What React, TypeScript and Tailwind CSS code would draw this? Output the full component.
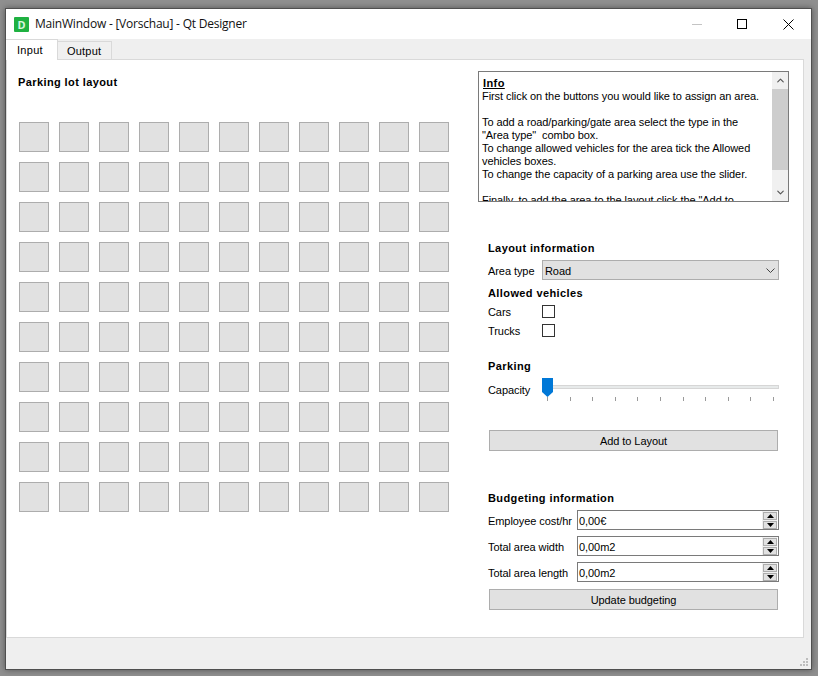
import React from 'react';
import { ChevronDown, ChevronUp } from 'lucide-react';

const ticks = Array.from({ length: 11 }, (_, i) => i);
const cells = Array.from({ length: 110 }, (_, i) => i);

function SpinBox({ value }: { value: string }) {
  return (
    <div className="flex h-[20px] w-[202px] items-center border border-[#7a7a7a] bg-white pl-[1px] pr-[1px]">
      <span className="flex-1 pt-[2px]">{value}</span>
      <div className="flex h-[18px] w-[15px] flex-col justify-center gap-[1px] bg-[#f0f0f0] pl-[1px]">
        <div className="flex h-[8px] items-center justify-center border border-[#adadad] bg-[#e1e1e1]">
          <svg width="7" height="4" viewBox="0 0 7 4"><path d="M3.5 0L7 4H0z" fill="#000" /></svg>
        </div>
        <div className="flex h-[8px] items-center justify-center border border-[#adadad] bg-[#e1e1e1]">
          <svg width="7" height="4" viewBox="0 0 7 4"><path d="M0 0h7L3.5 4z" fill="#000" /></svg>
        </div>
      </div>
    </div>
  );
}

function BudgetRow({ label, value, className }: { label: string; value: string; className?: string }) {
  return (
    <div className={`flex h-[20px] items-center ${className ?? ''}`}>
      <span className="w-[89px] pt-[2px]">{label}</span>
      <SpinBox value={value} />
    </div>
  );
}

export default function App() {
  return (
    <div className="h-[676px] w-[818px] overflow-hidden bg-[#8f8f8f] pl-[5px] pt-[8px] font-['Liberation_Sans',sans-serif] text-[11px] leading-[13px] tracking-[-0.07px] text-black">
      <div className="flex h-[662px] w-[807px] flex-col border border-[#4f4f4f] bg-[#efefef] shadow-[0_0_6px_rgba(0,0,0,0.4)]">
        <div className="flex h-[30px] items-center bg-white pl-[8px]">
          <div className="flex h-[15px] w-[15px] items-center justify-center rounded-[1px] bg-[#1fb141] font-['Noto_Sans',sans-serif] text-[11px] font-bold text-[#d8f5dc]">D</div>
          <span className="ml-[6px] font-['Open_Sans',sans-serif] text-[12px] leading-[16px] tracking-[-0.22px] text-[#111]">MainWindow - [Vorschau] - Qt Designer</span>
          <div className="ml-auto flex items-center">
            <div className="h-[1px] w-[10px] bg-[#c4c4c4]" />
            <div className="ml-[35px] h-[10px] w-[10px] border border-black" />
            <svg className="ml-[36px] mr-[17px]" width="11" height="11" viewBox="0 0 11 11">
              <path d="M0.5 0.5l10 10M10.5 0.5l-10 10" stroke="#000" strokeWidth="1" fill="none" />
            </svg>
          </div>
        </div>
        <div className="flex h-[20px] items-start">
          <div className="relative z-10 flex h-[21px] w-[52px] items-start border-r border-t border-[#d9d9d9] bg-white pl-[11px] pt-[4px] tracking-[0.3px]">Input</div>
          <div className="mt-[2px] flex h-[18px] w-[54px] items-start border-r border-t border-[#d9d9d9] bg-[#f0f0f0] pl-[9px] pt-[3px] tracking-[0.2px]">Output</div>
        </div>
        <div className="flex h-[579px] w-[798px] border border-[#d9d9d9] bg-white">
          <div className="w-[471px] pl-[12px] pt-[16px]">
            <h1 className="-ml-[1px] font-bold tracking-[0.4px]">Parking lot layout</h1>
            <div className="mt-[33px] grid grid-cols-[repeat(11,30px)] gap-[10px]">
              {cells.map((i) => (
                <div key={i} className="h-[30px] w-[30px] border border-[#adadad] bg-[#e1e1e1]" />
              ))}
            </div>
          </div>
          <div className="w-[311px] pt-[11px]">
            <div className="flex h-[131px] w-[311px] border border-[#7a7a7a] bg-white">
              <div className="flex-1 overflow-hidden pl-[3px] pt-[5px]">
                <p className="pl-[1px] font-bold tracking-[0.4px] underline">Info</p>
                <p>First click on the buttons you would like to assign an area.</p>
                <p className="mt-[13px]">To add a road/parking/gate area select the type in the</p>
                <p>"Area type"&nbsp; combo box.</p>
                <p>To change allowed vehicles for the area tick the Allowed</p>
                <p>vehicles boxes.</p>
                <p>To change the capacity of a parking area use the slider.</p>
                <p className="mt-[13px] whitespace-nowrap">Finally, to add the area to the layout click the "Add to</p>
              </div>
              <div className="flex w-[16px] flex-col items-center bg-[#f0f0f0]">
                <div className="flex h-[17px] items-center"><ChevronUp size={11} strokeWidth={2.5} color="#555" /></div>
                <div className="h-[81px] w-full bg-[#cdcdcd]" />
                <div className="mt-auto flex h-[17px] items-center"><ChevronDown size={11} strokeWidth={2.5} color="#555" /></div>
              </div>
            </div>
            <div className="ml-[10px] w-[291px]">
              <h2 className="mt-[39px] flex h-[14px] items-center font-bold tracking-[0.4px]">Layout information</h2>
              <div className="mt-[5px] flex h-[20px] items-center">
                <span className="w-[54px] pt-[2px]">Area type</span>
                <div className="flex h-[20px] flex-1 items-center justify-between border border-[#adadad] bg-[#e1e1e1] pl-[2px] pr-[3px]">
                  <span className="pt-[2px]">Road</span>
                  <svg width="9" height="5" viewBox="0 0 9 5">
                    <path d="M0.5 0.5l4 4 4-4" stroke="#444" strokeWidth="1" fill="none" />
                  </svg>
                </div>
              </div>
              <h2 className="mt-[6px] flex h-[14px] items-center font-bold tracking-[0.4px]">Allowed vehicles</h2>
              <div className="mt-[5px] flex h-[13px] items-center">
                <span className="w-[54px] pt-[2px]">Cars</span>
                <div className="h-[13px] w-[13px] border border-[#333] bg-white" />
              </div>
              <div className="mt-[6px] flex h-[13px] items-center">
                <span className="w-[54px] pt-[2px]">Trucks</span>
                <div className="h-[13px] w-[13px] border border-[#333] bg-white" />
              </div>
              <h2 className="mt-[22px] flex h-[14px] items-center font-bold tracking-[0.4px]">Parking</h2>
              <div className="mt-[5px] flex h-[24px]">
                <span className="w-[54px] pt-[6px]">Capacity</span>
                <div className="relative flex-1">
                  <div className="mt-[7px] h-[4px] border border-[#d6d6d6] bg-[#e7eaea]" />
                  <div className="ml-[5px] mt-[8px] flex w-[227px] justify-between">
                    {ticks.map((t) => (
                      <div key={t} className="h-[4px] w-[1px] bg-[#9a9a9a]" />
                    ))}
                  </div>
                  <svg className="absolute left-0 top-0" width="11" height="19" viewBox="0 0 11 19">
                    <path d="M0 0h11v14l-5.5 5L0 14z" fill="#0078d7" />
                  </svg>
                </div>
              </div>
              <button className="ml-[1px] mt-[28px] flex h-[21px] w-[289px] items-center justify-center border border-[#adadad] bg-[#e1e1e1] pt-[2px]">Add to Layout</button>
              <h2 className="mt-[40px] flex h-[14px] items-center font-bold tracking-[0.4px]">Budgeting information</h2>
              <BudgetRow className="mt-[5px]" label="Employee cost/hr" value="0,00€" />
              <BudgetRow className="mt-[6px]" label="Total area width" value="0,00m2" />
              <BudgetRow className="mt-[6px]" label="Total area length" value="0,00m2" />
              <button className="ml-[1px] mt-[7px] flex h-[21px] w-[289px] items-center justify-center border border-[#adadad] bg-[#e1e1e1] pt-[2px]">Update budgeting</button>
            </div>
          </div>
        </div>
        <div className="flex flex-1 items-end justify-end pb-[2px] pr-[2px]">
          <svg width="9" height="9" viewBox="0 0 9 9" fill="#bdbdbd">
            <rect x="6" y="0" width="2" height="2" />
            <rect x="3" y="3" width="2" height="2" />
            <rect x="6" y="3" width="2" height="2" />
            <rect x="0" y="6" width="2" height="2" />
            <rect x="3" y="6" width="2" height="2" />
            <rect x="6" y="6" width="2" height="2" />
          </svg>
        </div>
      </div>
    </div>
  );
}
